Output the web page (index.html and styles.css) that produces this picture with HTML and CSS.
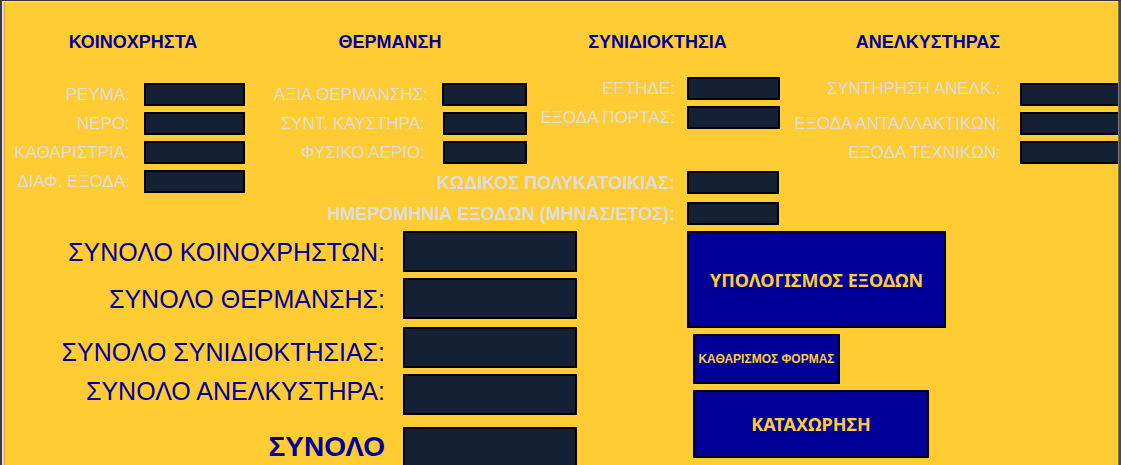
FILE: index.html
```html
<!DOCTYPE html>
<html lang="el">
<head>
<meta charset="utf-8">
<title>Κοινόχρηστα</title>
<link rel="stylesheet" href="styles.css">
</head>
<body>
<form class="form">
  <div class="groups">
    <fieldset class="group common">
      <legend class="title">ΚΟΙΝΟΧΡΗΣΤΑ</legend>
      <div class="rows">
        <div class="row"><label for="power">ΡΕΥΜΑ:</label><input id="power" type="text"></div>
        <div class="row"><label for="water">ΝΕΡΟ:</label><input id="water" type="text"></div>
        <div class="row"><label for="cleaner">ΚΑΘΑΡΙΣΤΡΙΑ:</label><input id="cleaner" type="text"></div>
        <div class="row"><label for="misc">ΔΙΑΦ. ΕΞΟΔΑ:</label><input id="misc" type="text"></div>
      </div>
    </fieldset>
    <fieldset class="group heating">
      <legend class="title">ΘΕΡΜΑΝΣΗ</legend>
      <div class="rows">
        <div class="row"><label for="heat">ΑΞΙΑ ΘΕΡΜΑΝΣΗΣ:</label><input id="heat" type="text"></div>
        <div class="row wide-gap"><label for="burner">ΣΥΝΤ. ΚΑΥΣΤΗΡΑ:</label><input id="burner" type="text"></div>
        <div class="row wide-gap"><label for="gas">ΦΥΣΙΚΟ ΑΕΡΙΟ:</label><input id="gas" type="text"></div>
      </div>
    </fieldset>
    <fieldset class="group ownership">
      <legend class="title">ΣΥΝΙΔΙΟΚΤΗΣΙΑ</legend>
      <div class="rows">
        <div class="row"><label for="tax">ΕΕΤΗΔΕ:</label><input id="tax" type="text"></div>
        <div class="row"><label for="door">ΕΞΟΔΑ ΠΟΡΤΑΣ:</label><input id="door" type="text"></div>
      </div>
    </fieldset>
    <fieldset class="group lift">
      <legend class="title">ΑΝΕΛΚΥΣΤΗΡΑΣ</legend>
      <div class="rows">
        <div class="row raised"><label for="service">ΣΥΝΤΗΡΗΣΗ ΑΝΕΛΚ.:</label><input id="service" type="text"></div>
        <div class="row"><label for="parts">ΕΞΟΔΑ ΑΝΤΑΛΛΑΚΤΙΚΩΝ:</label><input id="parts" type="text"></div>
        <div class="row"><label for="techs">ΕΞΟΔΑ ΤΕΧΝΙΚΩΝ:</label><input id="techs" type="text"></div>
      </div>
    </fieldset>
    <div class="building">
      <div class="row"><label for="code">ΚΩΔΙΚΟΣ ΠΟΛΥΚΑΤΟΙΚΙΑΣ:</label><input id="code" type="text"></div>
      <div class="row"><label for="date">ΗΜΕΡΟΜΗΝΙΑ ΕΞΟΔΩΝ (ΜΗΝΑΣ/ΕΤΟΣ):</label><input id="date" type="text"></div>
    </div>
  </div>
  <div class="summary">
    <div class="totals">
      <div class="total"><label for="t1">ΣΥΝΟΛΟ ΚΟΙΝΟΧΡΗΣΤΩΝ:</label><input id="t1" type="text"></div>
      <div class="total"><label for="t2">ΣΥΝΟΛΟ ΘΕΡΜΑΝΣΗΣ:</label><input id="t2" type="text"></div>
      <div class="total spaced low"><label for="t3">ΣΥΝΟΛΟ ΣΥΝΙΔΙΟΚΤΗΣΙΑΣ:</label><input id="t3" type="text"></div>
      <div class="total high"><label for="t4">ΣΥΝΟΛΟ ΑΝΕΛΚΥΣΤΗΡΑ:</label><input id="t4" type="text"></div>
      <div class="total grand"><label for="t5">ΣΥΝΟΛΟ</label><input id="t5" type="text"></div>
    </div>
    <div class="actions">
      <button class="calculate" type="button">ΥΠΟΛΟΓΙΣΜΟΣ ΕΞΟΔΩΝ</button>
      <button class="clear" type="button">ΚΑΘΑΡΙΣΜΟΣ ΦΟΡΜΑΣ</button>
      <button class="submit" type="button">ΚΑΤΑΧΩΡΗΣΗ</button>
    </div>
  </div>
</form>
<div class="scrollbar"></div>
</body>
</html>
```
FILE: styles.css
```css
* { box-sizing: border-box; }

body {
  margin: 0;
  height: 100vh;
  overflow: hidden;
  display: flex;
  border-top: 1px solid #3b3035;
  border-left: 2px solid #3c3c46;
  font-family: "Liberation Sans", Arial, sans-serif;
}

.form {
  flex: 1;
  min-width: 0;
  overflow: hidden;
  background: #ffcc33;
  border-top: 1px solid #dcdce0;
  border-left: 2px solid #dcdce8;
  box-shadow: inset 1px 0 #ff9900;
  padding-left: 1px;
}

.scrollbar {
  width: 3px;
  background: #4a4a4a;
  border-left: 1px solid #777777;
}

.groups {
  display: grid;
  grid-template-columns: 240fr 282fr 253fr 338fr;
  grid-template-rows: 169px auto;
}

.group {
  border: 0;
  margin: 0;
  padding: 0;
  min-width: 0;
}

.common { grid-row: 1 / 3; }

.title {
  width: 100%;
  padding: 30px 0 0 8px;
  text-align: center;
  font-size: 18px;
  line-height: 20px;
  font-weight: bold;
  color: #000099;
}

.common .title { padding-left: 16px; }

.rows {
  display: flex;
  flex-direction: column;
  gap: 6px;
  padding-top: 31px;
}

.ownership .rows { padding-top: 25px; }

.row {
  display: flex;
  justify-content: flex-end;
  align-items: center;
  gap: 14px;
  font-size: 17px;
  line-height: 20px;
  color: #dddddd;
}

label { white-space: nowrap; }

input {
  flex: none;
  margin: 0;
  padding: 0 4px;
  border: 2px solid #000000;
  background: #142033;
  color: #dddddd;
  font: inherit;
}

.row input { height: 23px; }
.common input { width: 101px; }
.heating input { width: 85px; }
.heating .wide-gap input { width: 84px; }
.wide-gap { gap: 18px; }
.ownership input { width: 93px; }
.ownership .row,
.building .row { gap: 12px; }

.lift .title {
  padding-left: 0;
  padding-right: 42px;
}
.lift .row {
  justify-content: flex-start;
  gap: 19px;
}
.lift label {
  flex: none;
  width: 221px;
  text-align: right;
}
.lift input { width: 120px; }
.raised label { padding-bottom: 12px; line-height: 11px; }

.building {
  grid-column: 2 / 4;
  grid-row: 2;
  display: flex;
  flex-direction: column;
  gap: 8px;
}
.building .row {
  font-size: 18px;
  font-weight: bold;
}
.building input {
  width: 92px;
  margin-right: 1px;
}

.summary {
  display: grid;
  grid-template-columns: 572fr 541fr;
  padding-top: 6px;
}

.totals {
  display: flex;
  flex-direction: column;
  gap: 6px;
}

.total {
  display: flex;
  justify-content: flex-end;
  align-items: center;
  gap: 18px;
  font-size: 25px;
  line-height: 30px;
  color: #000099;
}
.total input {
  width: 174px;
  height: 41px;
}
.spaced { margin-top: 2px; }
.low label { padding-top: 8px; }
.high label { padding-bottom: 8px; }
.grand {
  margin-top: 6px;
  font-size: 28px;
  font-weight: bold;
}
.grand label { padding-bottom: 2px; }

.actions {
  display: flex;
  flex-direction: column;
  align-items: flex-start;
  gap: 6px;
  padding-left: 110px;
}

button {
  margin: 0;
  padding: 0;
  border: 2px solid #000000;
  background: #000099;
  color: #ffcc33;
  font: bold 18px/24px "Noto Sans", sans-serif;
  white-space: nowrap;
}
.calculate { width: 259px; height: 97px; }
.clear,
.submit { margin-left: 6px; }
.clear {
  width: 147px;
  height: 50px;
  font: bold 12px/16px "Liberation Sans", Arial, sans-serif;
}
.submit { width: 236px; height: 68px; }
```
